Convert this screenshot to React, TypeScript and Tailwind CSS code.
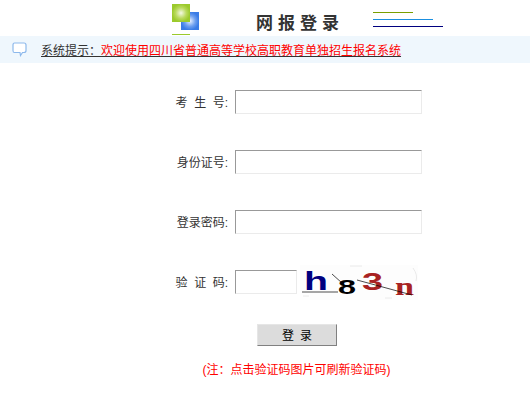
const FONT = "font-['Liberation_Sans','Noto_Sans_CJK_SC',sans-serif]";

function Logo() {
  return (
    <div className="flex flex-col w-[27px] mt-1">
      <svg width="27" height="26" viewBox="0 0 27 26">
        <defs>
          <radialGradient id="green">
            <stop offset="0" stopColor="#f4f9e4" />
            <stop offset="0.6" stopColor="#b9da5c" />
            <stop offset="1" stopColor="#9bca2c" />
          </radialGradient>
          <radialGradient id="blue">
            <stop offset="0" stopColor="#eaf1fd" />
            <stop offset="0.6" stopColor="#6d9fef" />
            <stop offset="1" stopColor="#3a7ce6" />
          </radialGradient>
        </defs>
        <rect x="9" y="8" width="18" height="18" fill="url(#blue)" />
        <rect x="0" y="0" width="18" height="18" fill="url(#green)" />
      </svg>
      <div className="w-[18px] h-px bg-[#9bca2c] mt-1" />
    </div>
  );
}

function Captcha() {
  return (
    <svg width="118" height="35" viewBox="0 0 118 35" className="ml-[3px]">
      <rect width="118" height="35" fill="#fdfdfd" />
      <text x="4" y="25" textLength="24" lengthAdjust="spacingAndGlyphs" fontFamily="Liberation Sans" fontWeight="bold" fontSize="25" fill="#00007f">h</text>
      <text x="38" y="29" textLength="18" lengthAdjust="spacingAndGlyphs" fontFamily="Liberation Sans" fontWeight="bold" fontSize="21" fill="#000">8</text>
      <text x="62" y="25" textLength="21" lengthAdjust="spacingAndGlyphs" fontFamily="Liberation Sans" fontWeight="bold" fontSize="23" fill="#a82222">3</text>
      <text x="95" y="30" textLength="19" lengthAdjust="spacingAndGlyphs" fontFamily="Liberation Serif" fontWeight="bold" fontSize="26" fill="#a82222">n</text>
      <path d="M2 27 H38 M32 9 L42 18 M57 15 L112 30" stroke="#000" strokeWidth="0.7" fill="none" />
      <path d="M113 3 Q118 10 116 16 M50 1 H62 M3 31 H9 M85 33 H92" stroke="#e4e4e4" strokeWidth="0.8" fill="none" />
    </svg>
  );
}

function Field({ label, short }: { label: string; short?: boolean }) {
  return (
    <div className="flex items-center h-[24px] mb-[36px]">
      <label className="w-[60px] pr-[7px] pt-[2px] text-right text-[12px] text-[#333] whitespace-pre [word-spacing:3.2px]">{label}</label>
      <input
        className={`${short ? "w-[62px]" : "w-[187px]"} h-[24px] bg-white border border-[#ebebeb] border-t-[#999] border-l-[#999]`}
      />
      {short && <Captcha />}
    </div>
  );
}

export default function App() {
  return (
    <div className={`w-[530px] h-[408px] bg-white overflow-hidden ${FONT}`}>
      {/* Header */}
      <div className="flex h-[36px] pl-[172px]">
        <Logo />
        <h1 className="ml-[57px] mt-[14px] text-[17px] leading-[20px] font-bold tracking-[5px] text-[#333] whitespace-nowrap">
          网报登录
        </h1>
        <div className="ml-[29px] mt-[12px] flex flex-col gap-[6px]">
          <div className="w-[40px] h-px bg-[#7a9f00]" />
          <div className="w-[60px] h-px bg-[#1a8fe0]" />
          <div className="w-[70px] h-px bg-[#000080]" />
        </div>
      </div>

      {/* Notice */}
      <div className="flex items-center h-[27px] bg-[#eff7fd] pl-[12px]">
        <svg width="15" height="15" viewBox="0 0 15 15">
          <path
            d="M2.5 1 H12 Q14 1 14 3 V8.5 Q14 10.5 12 10.5 H10.5 L8.5 13.5 L8 10.5 H2.5 Q1 10.5 1 8.5 V3 Q1 1 2.5 1 Z"
            fill="#fff"
            stroke="#8db9ec"
            strokeWidth="1.2"
          />
        </svg>
        <p className="ml-[14px] pt-[2px] text-[12px] leading-[16px] text-[#333] underline whitespace-nowrap">
          系统提示：<span className="text-[#f00]">欢迎使用四川省普通高等学校高职教育单独招生报名系统</span>
        </p>
      </div>

      {/* Form */}
      <form className="pt-[27px] pl-[175px]">
        <Field label="考 生 号:" />
        <Field label="身份证号:" />
        <Field label="登录密码:" />
        <Field label="验 证 码:" short />
      </form>

      {/* Submit, centred on the form rather than the page */}
      <div className="flex flex-col items-center -mt-[6px] pl-[64px]">
        <button className="w-[80px] h-[22px] pt-[1px] bg-[#dcdcdc] border border-[#e6e6e6] border-r-[#808080] border-b-[#808080] text-[12px] text-black [word-spacing:2.7px]">
          登 录
        </button>
        <p className="mt-[16px] -ml-[1px] text-[12px] leading-[16px] text-[#f00] whitespace-nowrap">
          (注：点击验证码图片可刷新验证码)
        </p>
      </div>
    </div>
  );
}
